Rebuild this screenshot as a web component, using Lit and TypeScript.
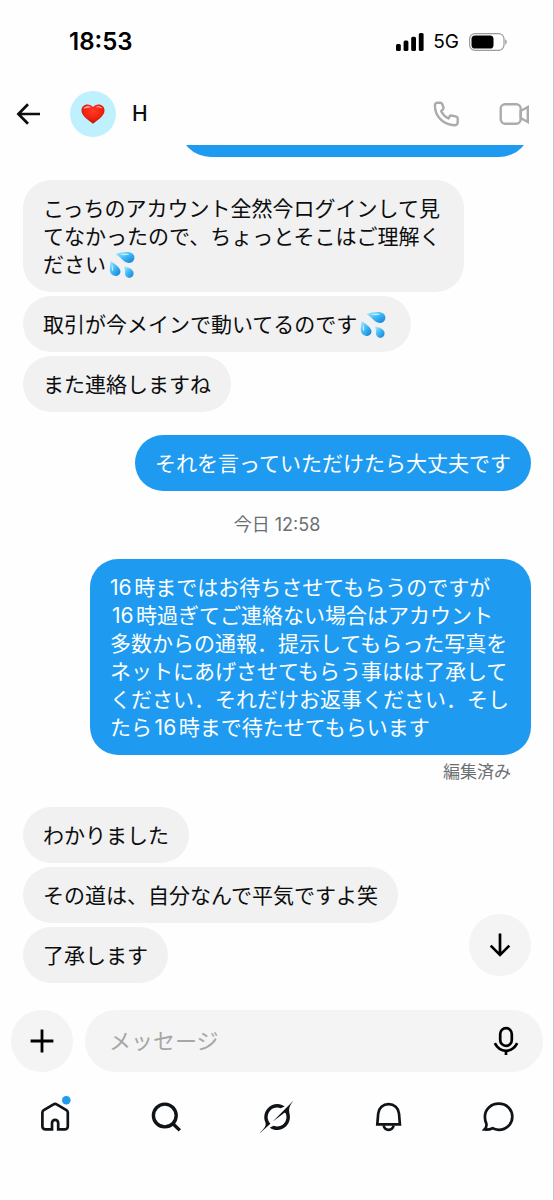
import { LitElement, html, css, svg, nothing } from "lit";
import { customElement, property } from "lit/decorators.js";

type Side = "in" | "out";

interface Message {
  side: Side;
  text: string;
  drops?: boolean;
  edited?: boolean;
}

interface Group {
  stamp?: string;
  messages: Message[];
}

const GROUPS: Group[] = [
  {
    messages: [
      { side: "in", text: "こっちのアカウント全然今ログインして見てなかったので、ちょっとそこはご理解ください", drops: true },
      { side: "in", text: "取引が今メインで動いてるのです", drops: true },
      { side: "in", text: "また連絡しますね" },
    ],
  },
  { messages: [{ side: "out", text: "それを言っていただけたら大丈夫です" }] },
  {
    stamp: "今日 12:58",
    messages: [
      {
        side: "out",
        text: "16時まではお待ちさせてもらうのですが\n\u200a16時過ぎてご連絡ない場合はアカウント多数からの通報．提示してもらった写真をネットにあげさせてもらう事はは了承してください．それだけお返事ください．そしたら16時まで待たせてもらいます",
        edited: true,
      },
    ],
  },
  {
    messages: [
      { side: "in", text: "わかりました" },
      { side: "in", text: "その道は、自分なんで平気ですよ笑" },
      { side: "in", text: "了承します" },
    ],
  },
];

@customElement("sweat-drops")
class SweatDrops extends LitElement {
  static styles = css`
    :host {
      display: inline-block;
      width: 28px;
      height: 28px;
      margin: 0 4px 0 2px;
      vertical-align: top;
    }
    .art {
      display: block;
      width: 28px;
      height: 28px;
    }
  `;

  render() {
    return html`<svg class="art" viewBox="0 0 28 28" role="img" aria-label="💦">
      <defs>
        <linearGradient id="g" x1="0" y1="0" x2="1" y2="1">
          <stop offset="0" stop-color="#b4ecff" />
          <stop offset=".45" stop-color="#45bdf8" />
          <stop offset="1" stop-color="#0f7bd6" />
        </linearGradient>
      </defs>
      <path d="M7.500 3.200C12 1 18.500.400 22.300 1.400C25.500 2.300 27 5 26.200 8C25.300 11.300 21.800 12.700 18.800 11.600C14.600 10 12.600 5.700 7.500 3.200Z" fill="url(#g)" />
      <path d="M2.400 10C6.500 12.500 10.900 15.500 12.200 19C13.100 21.900 11.400 24.400 8.700 24.900C5.400 25.400 2.400 23.400 1.800 19.800C1.400 17 2.500 14 2.400 10Z" fill="url(#g)" />
      <path d="M15.800 15.500C20 16.200 23.700 17.500 25.200 20.600C26.200 23.300 25 26.200 22.400 26.800C19.700 27.400 17.300 25.600 17 22.800C16.800 20.200 17.400 18.200 15.800 15.500Z" fill="url(#g)" />
      <path d="M12 3.500C15.500 2.400 19 2.300 21.500 3.200C19 4.400 15.500 4.600 12 3.500Z" fill="#fff" opacity=".65" />
      <path d="M4 14C5.200 16 5.600 18 5 20.500C3.600 19 3.600 16.600 4 14Z" fill="#fff" opacity=".65" />
    </svg>`;
  }
}

@customElement("chat-message")
class ChatMessage extends LitElement {
  @property({ attribute: false }) message!: Message;

  static styles = css`
    :host {
      display: flex;
      flex-direction: column;
    }
    .bubble {
      box-sizing: border-box;
      max-width: 441px;
      padding: 15px 20px 13px;
      border-radius: 28px;
      font-size: 21px;
      line-height: 28px;
      white-space: pre-wrap;
      word-break: break-all;
      text-autospace: normal;
    }
    .in {
      align-self: flex-start;
      background: #f1f1f1;
      color: #0c0d0e;
    }
    .out {
      align-self: flex-end;
      background: #1e9bf0;
      color: #fff;
    }
    .edited {
      align-self: flex-end;
      margin: 6px 20px 0 0;
      color: #6c7073;
      font-size: 17px;
      line-height: 23px;
    }
  `;

  render() {
    const m = this.message;
    return html`<div class="bubble ${m.side}">${m.text}${m.drops ? html`<sweat-drops></sweat-drops>` : nothing}</div>
      ${m.edited ? html`<span class="edited">編集済み</span>` : nothing}`;
  }
}

const home = svg`
  <path d="M15 30.400V24a3.100 3.100 0 0 1 6.200 0v6.400H27.800a3 3 0 0 0 3-3V13.600a3 3 0 0 0-1.400-2.500L19.700 5.300a3 3 0 0 0-3.200 0L6.800 11.100a3 3 0 0 0-1.400 2.500V27.400a3 3 0 0 0 3 3Z" />
  <circle class="dot" cx="29.300" cy="1.200" r="4.300" />`;
const search = svg`
  <circle class="bold" cx="16.800" cy="16.500" r="11.400" />
  <path class="bold" d="M25 24.700L31.800 31.400" />`;
const slash = svg`
  <path class="solid" transform="translate(1.500 1.200) scale(1.040)" d="M12.745 20.540l10.970-8.190c.539-.4 1.307-.244 1.564.38 1.349 3.288.746 7.241-1.938 9.955-2.683 2.714-6.417 3.310-9.830 1.954l-3.728 1.745c5.347 3.697 11.840 2.782 15.898-1.324 3.219-3.255 4.216-7.692 3.284-11.693l.008.009c-1.351-5.878.332-8.227 3.782-13.031L33 0l-4.540 4.590v-.014L12.743 20.544m-2.263 1.987c-3.837-3.707-3.175-9.446.1-12.755 2.420-2.449 6.388-3.448 9.852-1.979l3.720-1.737c-.67-.49-1.530-1.017-2.515-1.387-4.455-1.854-9.789-.931-13.410 2.728-3.483 3.523-4.579 8.940-2.697 13.561 1.405 3.454-.899 5.898-3.220 8.364C1.490 30.200.666 31.074 0 32l10.478-9.466" />`;
const bell = svg`
  <path stroke-linejoin="miter" d="M8.300 25.300L9.200 14.500C9.700 9 14 5.100 19.600 5.100S29.500 9 30 14.500L30.900 25.300Z" />
  <path d="M14.600 26.500c.6 2.500 2.600 4.300 5 4.300s4.400-1.800 5-4.300" />`;
const chat = svg`
  <path d="M18.700 4.700c8 0 13.600 5.700 13.600 13s-5.900 13.100-13.500 13.100c-2.400 0-4.600-.5-6.300-1.600-2.400 1.200-5 1.600-8 1.300 1.700-1.800 2.200-3.700 1.900-5.600C5.300 22.600 4.900 20.200 4.900 17.700 4.900 10.400 11 4.700 18.700 4.700Z" />`;

const NAV = [
  { label: "ホーム", icon: home },
  { label: "検索", icon: search },
  { label: "Grok", icon: slash },
  { label: "通知", icon: bell },
  { label: "メッセージ", icon: chat },
];

@customElement("app-root")
class AppRoot extends LitElement {
  static styles = css`
    :host {
      box-sizing: border-box;
      display: flex;
      flex-direction: column;
      height: 100vh;
      background: #fefefe;
      border-right: 1px solid #c6c6c8;
      color: #0c0d0e;
      font-family: Inter, "Noto Sans CJK JP", sans-serif;
    }
    svg {
      display: block;
      fill: none;
      stroke: currentColor;
      overflow: visible;
    }
    button {
      display: grid;
      place-items: center;
      flex: none;
      padding: 0;
      border: 0;
      background: none;
      color: inherit;
      font: inherit;
    }
    .status {
      display: flex;
      align-items: center;
      height: 83px;
      padding: 0 46px 0 69px;
      color: #000;
    }
    .time {
      margin-right: auto;
      font-size: 24px;
      font-weight: 600;
      line-height: 32px;
    }
    .network {
      margin: 0 10px 0 9px;
      font-size: 19px;
      font-weight: 400;
      line-height: 32px;
    }
    .header {
      display: flex;
      align-items: center;
      height: 62px;
      padding: 0 23px 0 16px;
    }
    .avatar {
      display: grid;
      place-items: center;
      width: 46px;
      height: 46px;
      margin: 0 16px 0 29px;
      border-radius: 50%;
      background: #bff0fd;
    }
    .name {
      flex: 1;
      margin: 0;
      font-size: 21px;
      font-weight: 500;
      line-height: 28px;
    }
    .call {
      color: #a9abad;
    }
    .call + .call {
      margin-left: 38px;
    }
    .stage {
      position: relative;
      display: flex;
      flex: 1;
      min-height: 0;
    }
    .log {
      display: flex;
      flex: 1;
      flex-direction: column;
      justify-content: flex-end;
      gap: 23px;
      overflow: hidden;
      padding: 0 22px 27px 23px;
    }
    .group {
      display: flex;
      flex: none;
      flex-direction: column;
      gap: 4px;
    }
    .stamp {
      margin: -1px 0 18px;
      color: #6c7073;
      font-size: 18px;
      line-height: 24px;
      text-align: center;
    }
    .previous {
      flex: none;
      align-self: flex-end;
      width: 352px;
      height: 64px;
      border-radius: 32px;
      background: #1e9bf0;
    }
    .round {
      width: 62px;
      height: 62px;
      border-radius: 50%;
      background: #f4f4f4;
      color: #000;
    }
    .latest {
      position: absolute;
      right: 22px;
      bottom: 34px;
    }
    .composer {
      display: flex;
      gap: 12px;
      padding: 0 10px 0 11px;
    }
    .field {
      display: flex;
      flex: 1;
      align-items: center;
      min-width: 0;
      padding: 0 23px 0 24px;
      border-radius: 31px;
      background: #f4f4f4;
      color: #000;
    }
    .input {
      flex: 1;
      min-width: 0;
      padding: 0;
      border: 0;
      outline: 0;
      background: none;
      color: inherit;
      font-family: inherit;
      font-size: 22px;
      line-height: 32px;
    }
    .input::placeholder {
      color: #a6a6a6;
      opacity: 1;
    }
    .nav {
      display: grid;
      grid-template-columns: repeat(5, 1fr);
      height: 128px;
      padding-top: 27px;
      box-sizing: border-box;
      align-items: start;
    }
    .tab {
      display: grid;
      place-items: center;
      color: #0f1419;
    }
    .tab svg {
      stroke-width: 2.700;
    }
    .bold {
      stroke-width: 3.400;
    }
    .solid {
      fill: currentColor;
      stroke: none;
    }
    .dot {
      fill: #1e9bf0;
      stroke: none;
    }
  `;

  render() {
    return html`
      <div class="status">
        <span class="time">18:53</span>
        <svg width="28" height="18" viewBox="0 0 28 18" aria-hidden="true">
          <g class="solid">
            <rect x="0" y="11" width="4.800" height="7" rx="1.500" />
            <rect x="7.600" y="7.500" width="4.800" height="10.500" rx="1.500" />
            <rect x="15.200" y="3.800" width="4.800" height="14.200" rx="1.500" />
            <rect x="22.800" y="0" width="4.800" height="18" rx="1.500" />
          </g>
        </svg>
        <span class="network">5G</span>
        <svg width="38" height="18" viewBox="0 0 38 18" aria-hidden="true">
          <rect x=".6" y=".6" width="34.400" height="16.800" rx="5.400" stroke="#9b9b9b" stroke-width="1.200" />
          <rect class="solid" x="2.500" y="2.500" width="22" height="13" rx="3.600" />
          <path d="M36.300 6.300v5.400c1.800-.8 1.800-4.600 0-5.400Z" fill="#8c8c8c" stroke="none" />
        </svg>
      </div>
      <header class="header">
        <button aria-label="戻る">
          <svg width="25" height="24" viewBox="0 0 25 24" stroke-width="2.700"><path d="M24 12H2.800M12 2.200L2.400 12L12 21.800" /></svg>
        </button>
        <div class="avatar">
          <svg width="24" height="20" viewBox="0 0 24 20" role="img" aria-label="❤️">
            <defs>
              <radialGradient id="heart" cx=".5" cy=".35" r=".65">
                <stop offset="0" stop-color="#ff3a26" />
                <stop offset=".6" stop-color="#f0210f" />
                <stop offset="1" stop-color="#b81208" />
              </radialGradient>
            </defs>
            <path d="M12 3C10.600 1.200 8.700.4 6.500.4 3 .4.500 2.800.5 6.400.5 12 7 15.600 12 19.700 17 15.600 23.500 12 23.500 6.400 23.500 2.800 21 .4 17.500.4 15.300.4 13.400 1.200 12 3Z" fill="url(#heart)" stroke="none" />
            <path d="M2.500 5C3.400 2.400 7.500 1.200 10 3.400 8 3.500 4.500 3.400 2.500 5ZM14.500 3.300C16.800 1.300 20.300 2 21.500 4.800 19.500 3.600 17 3.200 14.500 3.300Z" fill="#ffc0b4" stroke="none" />
          </svg>
        </div>
        <h1 class="name">H</h1>
        <button class="call" aria-label="音声通話">
          <svg width="28" height="28" viewBox="0 0 28 28" stroke-width="2.400" stroke-linejoin="round">
            <path d="M2.900 5.500C2.900 3.800 4.100 2.700 5.700 2.700H8.300c.9 0 1.600.5 1.900 1.300l1.300 3.600c.2.600.1 1-.3 1.500L9.200 11.200c1.600 3.400 4 5.700 7.300 7.200l1.300-2.300c.4-.6 1-.8 1.600-.6l5 1.100c.8.2 1.300.8 1.300 1.700v3.700c0 1.700-1.100 3.200-2.900 3.200C11.600 25.200 2.900 16.500 2.900 5.500Z" />
          </svg>
        </button>
        <button class="call" aria-label="ビデオ通話">
          <svg width="32" height="32" viewBox="0 0 32 32" stroke-width="2.400">
            <rect x="2.700" y="6.200" width="20" height="19.600" rx="4.500" />
            <path d="M22.700 13L29.800 9V24L22.700 20Z" />
          </svg>
        </button>
      </header>
      <div class="stage">
        <main class="log">
          <div class="previous"></div>
          ${GROUPS.map(
            (g) => html`<section class="group">
              ${g.stamp ? html`<p class="stamp">${g.stamp}</p>` : nothing}
              ${g.messages.map((m) => html`<chat-message .message=${m}></chat-message>`)}
            </section>`
          )}
        </main>
        <button class="round latest" aria-label="最新のメッセージへ">
          <svg width="24" height="24" viewBox="0 0 24 24" stroke-width="2.700"><path d="M12 .5V21.500M2.700 12.600L12 21.900L21.300 12.600" /></svg>
        </button>
      </div>
      <div class="composer">
        <button class="round" aria-label="追加">
          <svg width="24" height="24" viewBox="0 0 24 24" stroke-width="2.800"><path d="M12 .6V23.400M.6 12H23.400" /></svg>
        </button>
        <div class="field">
          <input class="input" type="text" placeholder="メッセージ" aria-label="メッセージ" />
          <button aria-label="音声メッセージ">
            <svg width="28" height="30" viewBox="0 0 28 30" stroke-width="2.700">
              <rect x="8.200" y="2.200" width="11.600" height="17.600" rx="5.800" />
              <path d="M2.800 17.200C5 21.500 9 24.800 14 24.800S23 21.500 25.200 17.200M14 24.800V29" />
            </svg>
          </button>
        </div>
      </div>
      <nav class="nav">
        ${NAV.map(
          (n) => html`<a class="tab" href="#" aria-label=${n.label}><svg width="36" height="36" viewBox="0 0 36 36">${n.icon}</svg></a>`
        )}
      </nav>
    `;
  }
}
